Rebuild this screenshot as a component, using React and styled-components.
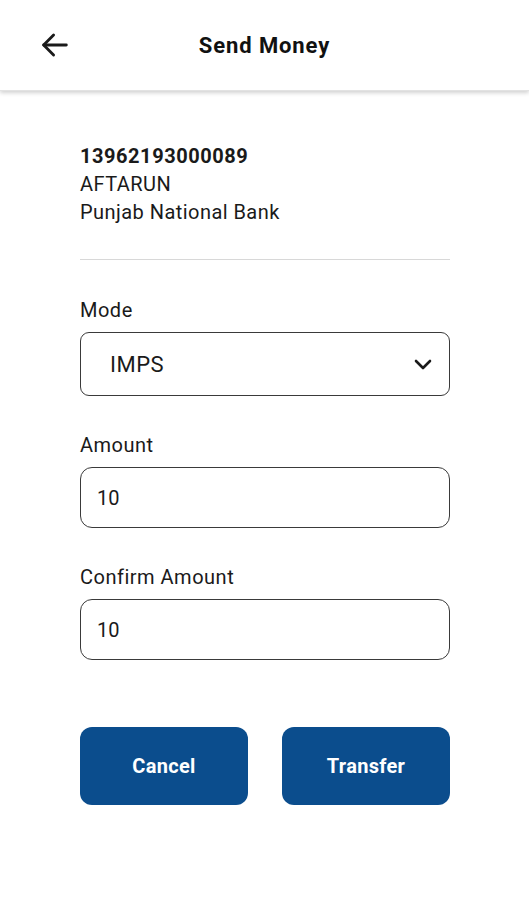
import styled, { createGlobalStyle } from "styled-components";

const GlobalStyle = createGlobalStyle`
  html, body {
    margin: 0;
    padding: 0;
    background: #fff;
    font-family: Roboto, "Noto Sans", Arial, sans-serif;
    color: #111;
  }
`;

const Page = styled.div`
  width: 529px;
  min-height: 900px;
  background: #fff;
`;

const Header = styled.header`
  height: 90px;
  display: flex;
  align-items: center;
  position: relative;
  justify-content: center;
  box-shadow: 0 2px 4px rgba(0, 0, 0, 0.18);
  border-bottom: 1px solid #e2e2e2;
`;

const BackButton = styled.button`
  position: absolute;
  left: 36px;
  top: 26px;
  width: 38px;
  height: 38px;
  border: none;
  background: none;
  padding: 0;
  display: flex;
  align-items: center;
  justify-content: center;
`;

const Title = styled.h1`
  margin: 0;
  font-size: 22px;
  letter-spacing: 0.9px;
  font-weight: 700;
  color: #111;
`;

const Content = styled.main`
  padding: 51px 79px 0 80px;
  display: flex;
  flex-direction: column;
`;

const Payee = styled.div`
  display: flex;
  flex-direction: column;
  font-size: 20px;
  letter-spacing: 0.45px;
  line-height: 28px;
  color: #1a1a1a;
  padding-bottom: 33px;
  border-bottom: 1px solid #d8d8d8;
`;

const AccountNo = styled.div`
  font-weight: 700;
  letter-spacing: 0.55px;
`;

const Field = styled.div`
  display: flex;
  flex-direction: column;
  margin-top: ${(p) => p.$top}px;
`;

const Label = styled.label`
  font-size: 20px;
  letter-spacing: 0.5px;
  line-height: 24px;
  color: #1a1a1a;
  margin-bottom: 10px;
`;

const SelectBox = styled.div`
  height: 64px;
  box-sizing: border-box;
  border: 1.5px solid #3a3a3a;
  border-radius: 9px;
  display: flex;
  align-items: center;
  justify-content: space-between;
  padding: 0 14px 0 29px;
  font-size: 22px;
  letter-spacing: 0.5px;
  color: #1a1a1a;
`;

const Input = styled.div`
  height: 61px;
  box-sizing: border-box;
  border: 1.5px solid #3a3a3a;
  border-radius: 12px;
  display: flex;
  align-items: center;
  padding: 0 16px;
  font-size: 20px;
  color: #1a1a1a;
`;

const Actions = styled.div`
  display: grid;
  grid-template-columns: 1fr 1fr;
  gap: 34px;
  margin-top: 67px;
`;

const ActionButton = styled.button`
  height: 78px;
  border: none;
  border-radius: 12px;
  background: #0b4d8d;
  color: #fff;
  font-family: Roboto, Arial, sans-serif;
  font-size: 20px;
  letter-spacing: 0.3px;
  font-weight: 700;
`;

export default function App() {
  return (
    <Page>
      <GlobalStyle />
      <Header>
        <BackButton aria-label="Back">
          <svg width="34" height="34" viewBox="0 0 24 24" fill="none" stroke="#1a1a1a" strokeWidth="2" strokeLinecap="round" strokeLinejoin="round">
            <path d="M20 12H4" />
            <path d="M11 5l-7 7 7 7" />
          </svg>
        </BackButton>
        <Title>Send Money</Title>
      </Header>
      <Content>
        <Payee>
          <AccountNo>13962193000089</AccountNo>
          <div>AFTARUN</div>
          <div>Punjab National Bank</div>
        </Payee>
        <Field $top={38}>
          <Label>Mode</Label>
          <SelectBox>
            <span>IMPS</span>
            <svg width="24" height="24" viewBox="0 0 24 24" fill="none" stroke="#1a1a1a" strokeWidth="2.6" strokeLinecap="round" strokeLinejoin="round">
              <path d="M5 9l7 7 7-7" />
            </svg>
          </SelectBox>
        </Field>
        <Field $top={37}>
          <Label>Amount</Label>
          <Input>10</Input>
        </Field>
        <Field $top={37}>
          <Label>Confirm Amount</Label>
          <Input>10</Input>
        </Field>
        <Actions>
          <ActionButton>Cancel</ActionButton>
          <ActionButton>Transfer</ActionButton>
        </Actions>
      </Content>
    </Page>
  );
}
